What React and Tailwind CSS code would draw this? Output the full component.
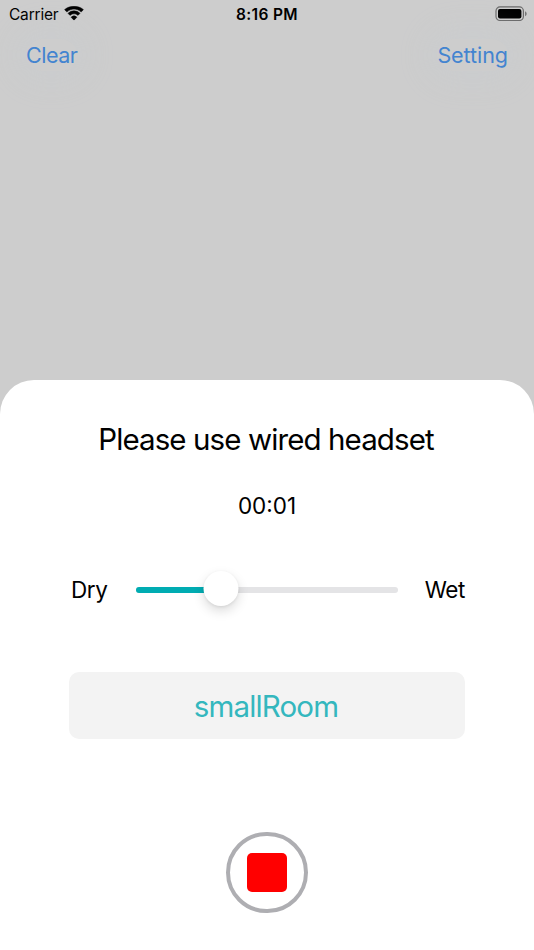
import React, { useState } from "react";

function StatusBar() {
  return (
    <div className="grid h-[27px] grid-cols-3 items-center pl-[9px] pr-[7px] text-[15.5px] leading-none text-black">
      <div className="flex items-center gap-[6px]">
        <span className="pt-[2px] tracking-[-0.2px]">Carrier</span>
        <svg width="20" height="15" viewBox="0 0 20 15" fill="black" stroke="black" strokeWidth="0.5">
          <path d="M10 3.1c2.6 0 5 1 6.8 2.7.15.14.37.14.5 0l1.9-1.85c.14-.15.14-.38 0-.52C16.7 1.4 13.4.3 10 .3S3.3 1.4.8 3.430c-.14.140-.14.370 0 .520l1.900 1.850c.13.140.35.140.5 0C5 4.100 7.400 3.100 10 3.100z" />
          <path d="M10 7.800c1.350 0 2.650.5 3.650 1.420.15.140.38.140.52 0l1.600-1.650c.15-.15.15-.38 0-.52a8.500 8.500 0 0 0-11.540 0c-.15.140-.15.370 0 .520l1.600 1.650c.14.140.37.140.52 0A5.400 5.400 0 0 1 10 7.800z" />
          <path d="M12.700 11.450c.15-.150.150-.390-.01-.530a4.100 4.100 0 0 0-5.380 0c-.16.140-.16.380-.01.530l2.430 2.500c.15.150.39.150.54 0z" />
        </svg>
      </div>
      <span className="-ml-0.5 pt-[2px] text-center font-semibold tracking-[0.35px]">8:16 PM</span>
      <svg className="justify-self-end" width="32" height="15" viewBox="0 0 32 15">
        <rect x="1" y="0.9" width="27.400" height="13.600" rx="4" fill="none" stroke="#6b6b6b" strokeWidth="1.200" />
        <rect x="3" y="2.900" width="23.400" height="9.600" rx="2" fill="black" />
        <path d="M30 5.200v5c1-.4 1.700-1.400 1.700-2.500S31 5.600 30 5.200z" fill="#777777" />
      </svg>
    </div>
  );
}

function App() {
  const [wet] = useState(32.5);

  return (
    <div
      className="flex h-[950px] w-[534px] flex-col overflow-hidden bg-[#cdcdcd] text-black"
      style={{ fontFamily: 'Inter, "Liberation Sans", sans-serif' }}
    >
      <StatusBar />

      <div className="flex h-[56px] items-center justify-between px-[26px] text-[21.5px] text-[#4384d0]">
        <button className="rounded-full tracking-[-0.5px] shadow-[0_0_30px_10px_rgba(196,204,214,0.2)]">
          Clear
        </button>
        <button className="rounded-full tracking-[-0.05px] shadow-[0_0_30px_10px_rgba(196,204,214,0.2)]">
          Setting
        </button>
      </div>

      <div className="mt-auto flex h-[570px] flex-col items-center rounded-t-[34px] bg-white">
        <h1 className="mt-[39px] mr-[2px] text-[29.5px] leading-[40px] tracking-[-0.9px]">
          Please use wired headset
        </h1>
        <p className="mt-[31px] text-[22.5px] leading-[32px]">00:01</p>

        <div className="mt-[50px] flex h-[36px] w-[396px] items-center text-[22.5px] tracking-[-0.4px]">
          <span className="w-[67px] pl-[2px]">Dry</span>
          <div className="relative h-[6px] w-[262px] rounded-full bg-[#e4e4e6]">
            <div
              className="h-full rounded-full bg-[#00acb2]"
              style={{ width: `${wet}%` }}
            />
            <div
              className="absolute top-[-16px] h-[35px] w-[35px] -translate-x-1/2 rounded-full bg-white shadow-[0_5px_12px_rgba(0,0,0,0.14),0_1px_3px_rgba(0,0,0,0.08)]"
              style={{ left: `${wet}%` }}
            />
          </div>
          <span className="flex-1 text-right">Wet</span>
        </div>

        <button className="mt-[64px] h-[67px] w-[396px] rounded-[10px] bg-[#f3f3f3] pt-px pr-[2px] text-[29.5px] tracking-[-0.85px] text-[#34b7be]">
          smallRoom
        </button>

        <button className="mt-[93px] flex h-[81px] w-[82px] items-center justify-center rounded-full border-4 border-[#aeaeb2]">
          <span className="h-[39px] w-[40px] rounded-[5px] bg-[#ff0000]" />
        </button>
      </div>
    </div>
  );
}

export default App;
